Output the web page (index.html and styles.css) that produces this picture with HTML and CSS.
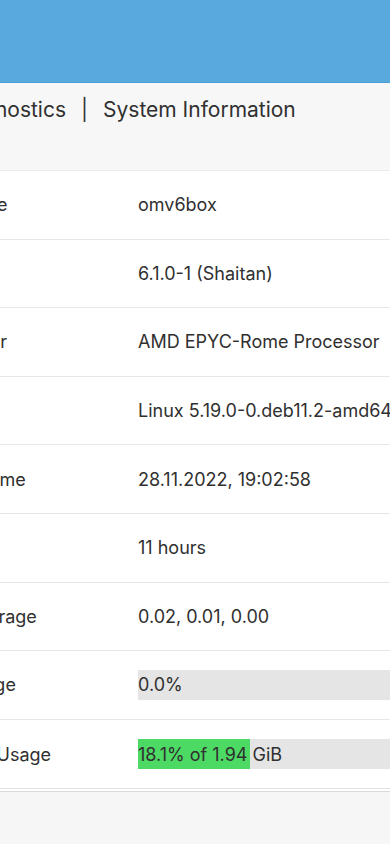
FILE: index.html
```html
<!DOCTYPE html>
<html>
<head>
<meta charset="utf-8">
<link rel="stylesheet" href="styles.css">
</head>
<body>
<div class="topbar"></div>
<div class="crumbs">
  <span class="crumb">Diagnostics</span>
  <span class="sep">|</span>
  <span class="crumb">System Information</span>
</div>
<div class="card">
  <div class="row"><div class="label">Hostname</div><div class="value">omv6box</div></div>
  <div class="row"><div class="label">Version</div><div class="value">6.1.0-1 (Shaitan)</div></div>
  <div class="row"><div class="label">Processor</div><div class="value">AMD EPYC-Rome Processor</div></div>
  <div class="row"><div class="label">Kernel</div><div class="value">Linux 5.19.0-0.deb11.2-amd64</div></div>
  <div class="row"><div class="label">System time</div><div class="value">28.11.2022, 19:02:58</div></div>
  <div class="row"><div class="label">Uptime</div><div class="value">11 hours</div></div>
  <div class="row"><div class="label">Load average</div><div class="value">0.02, 0.01, 0.00</div></div>
  <div class="row"><div class="label">CPU usage</div><div class="value"><div class="bar"><div class="fill" style="width:0%"></div><span class="bar-text">0.0%</span></div></div></div>
  <div class="row"><div class="label">Memory Usage</div><div class="value"><div class="bar"><div class="fill" style="width:18.1%"></div><span class="bar-text">18.1% of 1.94 GiB</span></div></div></div>
</div>
<div class="footer"></div>
</body>
</html>
```
FILE: styles.css
```css
html, body {
  margin: 0;
  padding: 0;
  width: 390px;
  overflow: hidden;
  background: #f6f6f6;
  font-family: Inter, "Noto Sans", sans-serif;
  color: #303030;
}
.topbar {
  height: 82px;
  background: #5aa9de;
  border-bottom: 1px solid #4d9fd8;
}
.crumbs {
  height: 88px;
  box-sizing: border-box;
  padding-top: 14px;
  background: #f7f7f7;
  display: flex;
  align-items: flex-start;
  gap: 15px;
  margin-left: -50px;
  font-size: 21px;
  line-height: 25px;
  white-space: nowrap;
  border-bottom: 1px solid #ececec;
}
.sep {
  color: #333;
}
.card {
  background: #fff;
  margin-left: -79px;
  width: 740px;
  border-bottom: 1px solid #e2e2e2;
  box-shadow: 0 2px 0 #fff, 0 3px 0 #d8d8d8;
}
.row {
  display: flex;
  align-items: center;
  height: 68.6px;
  box-sizing: border-box;
  border-bottom: 1.5px solid #e7e7e7;
  font-size: 18px;
  white-space: nowrap;
}
.row:last-child {
  border-bottom: none;
}
.label {
  width: 217px;
  flex: none;
}
.value {
  flex: 1;
}
.bar {
  position: relative;
  width: 619px;
  height: 30px;
  background: #e5e5e5;
  display: flex;
  align-items: center;
}
.fill {
  position: absolute;
  left: 0;
  top: 0;
  bottom: 0;
  background: #4cd964;
}
.bar-text {
  position: relative;
}
.footer {
  height: 60px;
}
```
